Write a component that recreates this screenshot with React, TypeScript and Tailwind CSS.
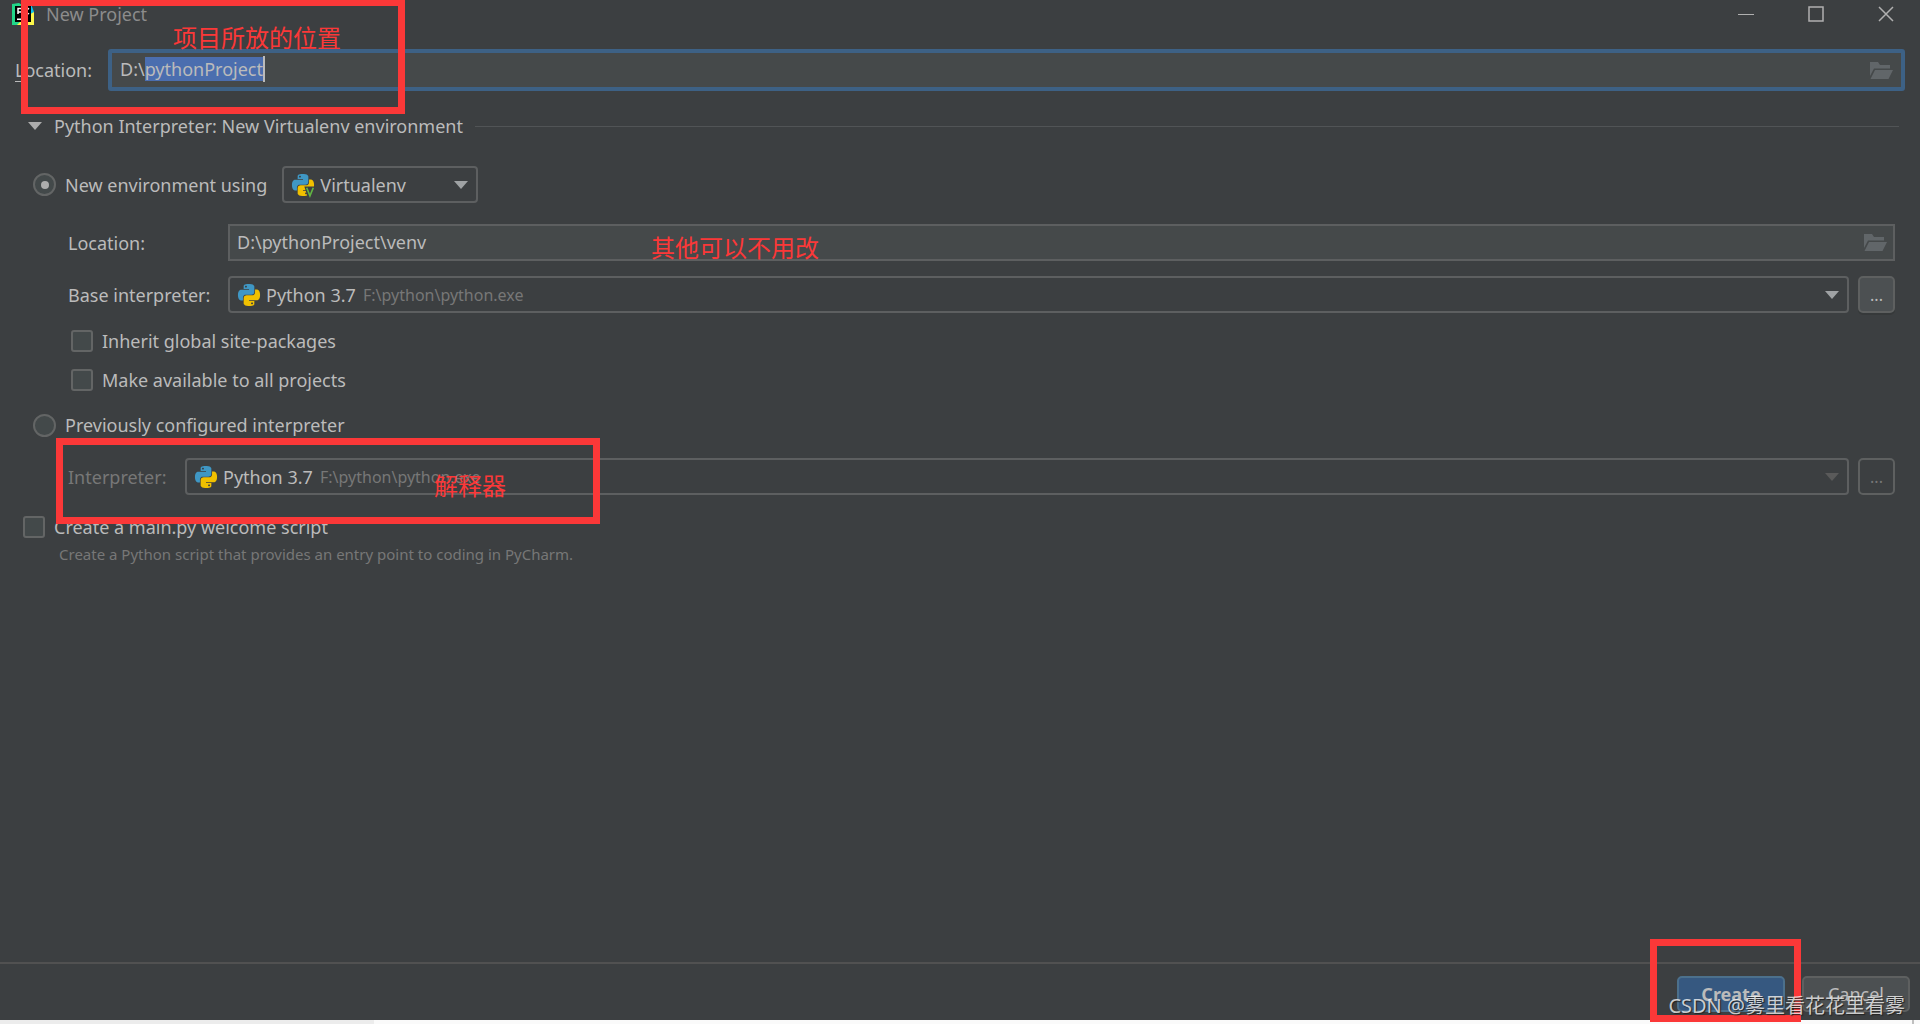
import { useEffect, useId, useRef, useState } from 'react';
import type { ReactNode } from 'react';

const SNAKE =
  'M14.25.18l.9.2.73.26.59.3.45.32.34.34.25.34.16.33.1.3.04.26.02.2-.01.13V8.5l-.05.63-.13.55-.21.46-.26.38-.3.31-.33.25-.35.19-.35.14-.33.1-.3.07-.26.04-.21.02H8.77l-.69.05-.59.14-.5.22-.41.27-.33.32-.27.35-.2.36-.15.37-.1.35-.07.32-.04.27-.02.21v3.06H3.17l-.21-.03-.28-.07-.32-.12-.35-.18-.36-.26-.36-.36-.35-.46-.32-.59-.28-.73-.21-.88-.14-1.05-.05-1.23.06-1.22.16-1.04.24-.87.32-.71.36-.57.4-.44.42-.33.42-.24.4-.16.36-.1.32-.05.24-.01h.16l.06.01h8.16v-.83H6.18l-.01-2.75-.02-.37.05-.34.11-.31.17-.28.25-.26.31-.23.38-.2.44-.18.51-.15.58-.12.64-.1.71-.06.77-.04.84-.02 1.27.05zm-6.3 1.98l-.23.33-.08.41.08.41.23.34.33.22.41.09.41-.09.33-.22.23-.34.08-.41-.08-.41-.23-.33-.33-.22-.41-.09-.41.09z';

function PythonIcon({ venv = false }: { venv?: boolean }) {
  return (
    <svg className="h-[22px] w-[22px] overflow-visible" viewBox="0 0 24 24" aria-hidden="true">
      <path fill="#3f97c4" d={SNAKE} />
      <path fill="#f0c000" d={SNAKE} transform="rotate(180 12 12)" />
      {venv && (
        <>
          <path d="M13.500 13.500H25V25H17z" fill="#3c3f41" />
          <path d="M16 15l3.600 8.700L23.200 15" fill="none" stroke="#62b543" strokeWidth="1.800" />
        </>
      )}
    </svg>
  );
}

function PyCharmIcon() {
  return (
    <svg className="h-[22px] w-[22px]" viewBox="0 0 22 22" aria-hidden="true">
      <path d="M0 1L7 0l9 6-6 16H0z" fill="#21d789" />
      <path d="M13 1h6l3 8-6 6z" fill="#07c3f2" />
      <path d="M22 9v13H5l8-8z" fill="#fcf84a" />
      <path d="M3 3h16v16H3z" fill="#000" />
      <path d="M6 11V5.500h2.500a1.700 1.700 0 010 3.500H6M17 6.200a2.700 2.700 0 10 0 4" fill="none" stroke="#fff" strokeWidth="1.500" />
      <path d="M5 15.500h6v1.500H5z" fill="#fff" />
    </svg>
  );
}

function FolderIcon() {
  return (
    <svg className="h-[17px] w-[23px]" viewBox="0 0 23 17" fill="#616669" aria-hidden="true">
      <path d="M0 0h8l2 3h10v3.500H4L0 14z" />
      <path d="M5 8h18l-4.500 9H.5z" />
    </svg>
  );
}

function Arrow({ className }: { className: string }) {
  return (
    <svg className={className} width="14" height="8" viewBox="0 0 14 8" fill="currentColor" aria-hidden="true">
      <path d="M0 0h14L7 8z" />
    </svg>
  );
}

interface SelectProps {
  id: string;
  value: string;
  path?: string;
  venv?: boolean;
  dim?: boolean;
  className: string;
}

function IconSelect({ id, value, path, venv, dim, className }: SelectProps) {
  return (
    <div className={`relative h-[37px] ${className}`}>
      <select
        id={id}
        className="h-full w-full appearance-none rounded-[4px] border-2 border-[#5d5f60] bg-[#3c3f41] pl-9 leading-6 outline-none"
      >
        <option>{value}</option>
      </select>
      <span className="pointer-events-none absolute inset-y-0 left-[10px] flex items-center">
        <PythonIcon venv={venv} />
      </span>
      {path && (
        <span className="pointer-events-none absolute inset-y-0 left-[135px] flex items-center text-base text-[#777777]">
          {path}
        </span>
      )}
      <span className="pointer-events-none absolute inset-y-0 right-[10px] flex items-center">
        <Arrow className={dim ? 'text-[#5a5a5a]' : 'text-[#9fa2a4]'} />
      </span>
    </div>
  );
}

function Check({ children }: { children: ReactNode }) {
  return (
    <label className="flex h-[39px] w-fit items-center gap-[9px]">
      <input
        type="checkbox"
        className="h-[22px] w-[22px] appearance-none rounded-[3px] border-2 border-[#636565] bg-[#43494a] checked:bg-[#4b6eaf]"
      />
      {children}
    </label>
  );
}

function Radio({ children, checked, onChange }: { children: ReactNode; checked: boolean; onChange: () => void }) {
  return (
    <label className="flex items-center gap-[9px]">
      <input
        type="radio"
        name="env"
        checked={checked}
        onChange={onChange}
        className="grid h-[23px] w-[23px] appearance-none place-items-center rounded-full border-2 border-[#636565] bg-[#43494a] checked:before:h-2 checked:before:w-2 checked:before:rounded-full checked:before:bg-[#adadad]"
      />
      {children}
    </label>
  );
}

function MoreButton({ dim = false }: { dim?: boolean }) {
  return (
    <button
      type="button"
      aria-label="Browse interpreters"
      className={
        dim
          ? 'h-[37px] w-[37px] rounded-[5px] border-2 border-[#5e6060] text-base text-[#777777]'
          : 'h-[37px] w-[37px] rounded-[5px] border-2 border-[#5e6060] bg-[#4c5052] text-base shadow-[0_2px_0_#36393a]'
      }
    >
      ...
    </button>
  );
}

export default function App() {
  const id = useId();
  const pathRef = useRef<HTMLInputElement>(null);
  const [mode, setMode] = useState<'new' | 'existing'>('new');
  const [location, setLocation] = useState('D:\\pythonProject');

  // preselect the folder name so it can be typed over
  useEffect(() => {
    const input = pathRef.current;
    if (!input) return;
    input.focus();
    input.setSelectionRange(3, input.value.length);
  }, []);

  return (
    <div className="relative flex min-h-screen flex-col overflow-hidden bg-[#3c3f41] font-['Noto_Sans','Noto_Sans_CJK_SC',sans-serif] text-lg leading-6 text-[#bbbbbb]">
      <header className="flex h-7 items-center gap-3 pl-3">
        <PyCharmIcon />
        <h1 className="text-[#8c8c8c]">New Project</h1>
        <div className="ml-auto flex items-center gap-[54px] pr-[26px] text-[#b0b0b0]">
          <button type="button" aria-label="Minimize">
            <svg className="h-4 w-4" viewBox="0 0 16 16" stroke="currentColor">
              <path d="M0 8.500h16" />
            </svg>
          </button>
          <button type="button" aria-label="Maximize">
            <svg className="h-4 w-4" viewBox="0 0 16 16" fill="none" stroke="currentColor" strokeWidth="1.500">
              <path d="M1 1h14v14H1z" />
            </svg>
          </button>
          <button type="button" aria-label="Close">
            <svg className="h-4 w-4" viewBox="0 0 16 16" stroke="currentColor" strokeWidth="1.500">
              <path d="M1 1l14 14M15 1L1 15" />
            </svg>
          </button>
        </div>
      </header>

      <main className="flex-1">
        <div className="mt-[21px] flex items-center pr-[15px] pl-[15px]">
          <label htmlFor={`${id}-loc`} className="w-[93px]">
            <span className="underline underline-offset-4">L</span>ocation:
          </label>
          <div className="relative flex-1">
            <input
              id={`${id}-loc`}
              ref={pathRef}
              value={location}
              onChange={(e) => setLocation(e.target.value)}
              className="block h-[42px] w-full rounded-[3px] border-4 border-[#3d6185] bg-[#45494a] pr-12 pb-0.5 pl-2 outline-none selection:bg-[#4b6eaf] selection:text-[#bbbbbb]"
            />
            <span className="pointer-events-none absolute top-[7px] left-[155px] h-[26px] w-0.5 bg-[#bbbbbb]" />
            <span className="pointer-events-none absolute inset-y-0 right-3 flex items-center">
              <FolderIcon />
            </span>
          </div>
        </div>

        <div className="mt-[23px] flex items-center gap-3 pr-[21px] pl-7">
          <Arrow className="text-[#adadad]" />
          <h2>Python Interpreter: New Virtualenv environment</h2>
          <div className="h-px flex-1 bg-[#515456]" />
        </div>

        <div className="mt-7 flex items-center gap-[15px] pl-[33px]">
          <Radio checked={mode === 'new'} onChange={() => setMode('new')}>
            New environment using
          </Radio>
          <IconSelect id={`${id}-kind`} value="Virtualenv" venv className="w-[196px]" />
        </div>

        <div className="mt-[21px] flex items-center pr-[25px] pl-[68px]">
          <label htmlFor={`${id}-venv`} className="w-[160px]">
            Location:
          </label>
          <div className="relative flex-1">
            <input
              id={`${id}-venv`}
              defaultValue="D:\pythonProject\venv"
              className="block h-[37px] w-full border-2 border-[#5d5f60] bg-[#45494a] pr-12 pb-0.5 pl-[7px] outline-none"
            />
            <span className="pointer-events-none absolute inset-y-0 right-2 flex items-center">
              <FolderIcon />
            </span>
          </div>
        </div>

        <div className="mt-[15px] flex items-center pr-[25px] pl-[68px]">
          <label htmlFor={`${id}-base`} className="w-[160px]">
            Base interpreter:
          </label>
          <IconSelect id={`${id}-base`} value="Python 3.7" path="F:\python\python.exe" className="mr-[9px] flex-1" />
          <MoreButton />
        </div>

        <div className="mt-2 pl-[71px]">
          <Check>Inherit global site-packages</Check>
          <Check>Make available to all projects</Check>
        </div>

        <div className="mt-[14px] flex pl-[33px]">
          <Radio checked={mode === 'existing'} onChange={() => setMode('existing')}>
            Previously configured interpreter
          </Radio>
        </div>

        <div className="mt-[21px] flex items-center pr-[25px] pl-[68px]">
          <label htmlFor={`${id}-prev`} className="w-[117px] text-[#777777]">
            Interpreter:
          </label>
          <IconSelect id={`${id}-prev`} value="Python 3.7" path="F:\python\python.exe" dim className="mr-[9px] flex-1" />
          <MoreButton dim />
        </div>

        <div className="mt-3 pl-[23px]">
          <Check>Create a main.py welcome script</Check>
          <p className="-mt-1 pl-9 text-[15px] text-[#777777]">
            Create a Python script that provides an entry point to coding in PyCharm.
          </p>
        </div>
      </main>

      <footer className="flex h-[58px] items-start justify-end gap-[17px] border-t-2 border-[#515151] pt-3 pr-[10px]">
        <button
          type="button"
          className="h-9 w-[108px] rounded-[5px] border-2 border-[#4c708c] bg-[#365880] font-bold"
        >
          Create
        </button>
        <button type="button" className="h-9 w-[108px] rounded-[5px] border-2 border-[#5e6060] bg-[#4c5052]">
          Cancel
        </button>
      </footer>
      <div className="flex h-1 bg-[#fafafa]">
        <div className="w-[374px] bg-[#ececec]" />
        <div className="mr-[6px] ml-auto w-0.5 bg-[#c0c0c0]" />
      </div>

      {/* annotations drawn over the dialog */}
      <div className="pointer-events-none absolute top-0 left-[21px] h-[114px] w-96 border-[7px] border-t-[6px] border-[#fb3838]" />
      <p className="pointer-events-none absolute top-[22px] left-[173px] text-2xl text-[#fb3838]">项目所放的位置</p>
      <p className="pointer-events-none absolute top-[232px] left-[651px] text-2xl text-[#fb3838]">其他可以不用改</p>
      <div className="pointer-events-none absolute top-[438px] left-14 h-[86px] w-[544px] border-[7px] border-[#fb3838]" />
      <p className="pointer-events-none absolute top-[470px] left-[434px] text-2xl text-[#fb3838]">解释器</p>
      <div className="pointer-events-none absolute right-[119px] bottom-0.5 h-[83px] w-[151px] border-[7px] border-[#fb3838]" />
      <p className="pointer-events-none absolute right-[15px] bottom-1 text-xl text-white/75 [text-shadow:1px_1px_1px_#222]">
        CSDN @雾里看花花里看雾
      </p>
    </div>
  );
}
